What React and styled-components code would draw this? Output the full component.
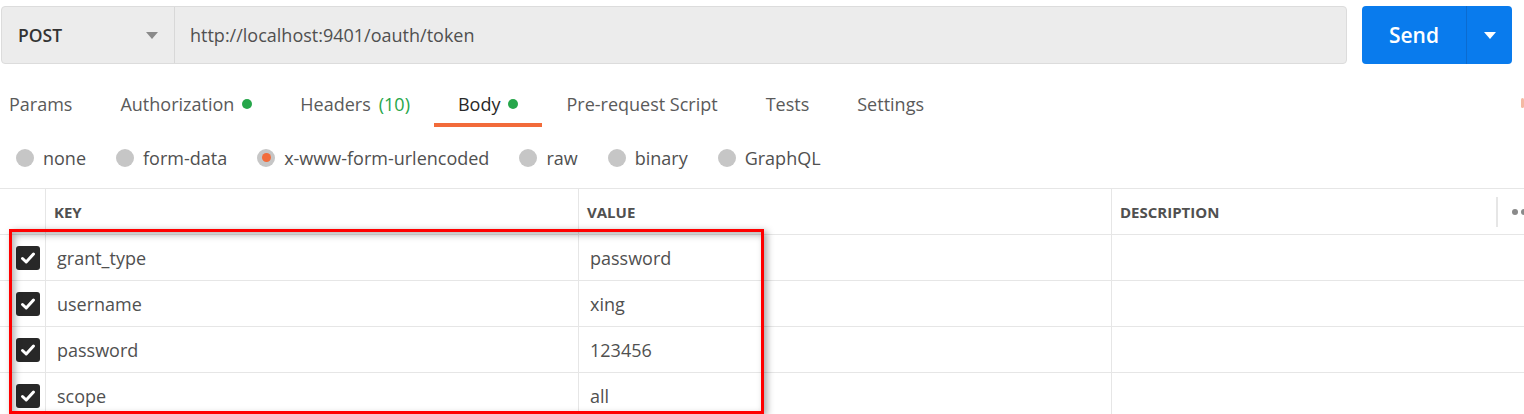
import React from 'react';
import styled, { createGlobalStyle } from 'styled-components';

const GlobalStyle = createGlobalStyle`
    html, body {
        margin: 0;
        padding: 0;
        background: #ffffff;
        overflow: hidden;
    }
    body {
        font-family: "Open Sans", "Noto Sans", sans-serif;
        color: #505050;
    }
`

const Page = styled.div`
    position: relative;
    width: 1524px;
    height: 414px;
    overflow: hidden;
`

const TopBar = styled.div`
    display: flex;
    align-items: stretch;
    height: 58px;
    padding: 6px 12px 0 1px;
    gap: 15px;
`

const RequestBox = styled.div`
    flex: 1;
    display: flex;
    background: #ececec;
    border: 1px solid #dcdcdc;
    border-radius: 4px;
`

const MethodSelect = styled.div`
    width: 173px;
    box-sizing: border-box;
    display: flex;
    align-items: center;
    justify-content: space-between;
    padding: 0 16px 0 16px;
    border-right: 1px solid #d8d8d8;
    font-size: 17.5px;
    font-weight: 600;
    color: #333333;
`

const Caret = styled.span`
    width: 0;
    height: 0;
    border-left: 6px solid transparent;
    border-right: 6px solid transparent;
    border-top: 7px solid ${p => p.$color || '#8a8a8a'};
`

const UrlText = styled.div`
    display: flex;
    align-items: center;
    padding-left: 15px;
    font-size: 18px;
    color: #505050;
`

const SendButton = styled.div`
    width: 150px;
    display: flex;
    background: #097bed;
    border-radius: 4px;
    color: #ffffff;
`

const SendLabel = styled.div`
    flex: 1;
    display: flex;
    align-items: center;
    justify-content: center;
    font-size: 21px;
    font-weight: 600;
    border-right: 1px solid #0b6bd0;
`

const SendArrow = styled.div`
    width: 45px;
    display: flex;
    align-items: center;
    justify-content: center;
`

const Tabs = styled.div`
    display: flex;
    height: 63px;
    margin-left: -15px;
`

const Tab = styled.div`
    display: flex;
    align-items: center;
    gap: 8px;
    padding: 21px 24px 0 24px;
    font-size: 18px;
    border-bottom: 4px solid ${p => (p.$active ? '#f26b3a' : 'transparent')};
    color: ${p => (p.$active ? '#282828' : '#5a5a5a')};
`

const Dot = styled.span`
    width: 10px;
    height: 10px;
    border-radius: 50%;
    background: #26a64a;
`

const Count = styled.span`
    color: #26a64a;
`

const Radios = styled.div`
    display: flex;
    align-items: center;
    gap: 30px;
    height: 61px;
    padding-left: 16px;
    border-bottom: 1px solid #e6e6e6;
`

const RadioItem = styled.div`
    display: flex;
    align-items: center;
    gap: 9px;
    font-size: 18px;
    color: #505050;
`

const RadioCircle = styled.span`
    width: 18px;
    height: 18px;
    border-radius: 50%;
    background: #c6c6c6;
    display: flex;
    align-items: center;
    justify-content: center;
    &::after {
        content: '';
        width: 9px;
        height: 9px;
        border-radius: 50%;
        background: ${p => (p.$checked ? '#f26b3a' : 'transparent')};
    }
`

const Table = styled.div`
    display: grid;
    grid-template-columns: 46px 533px 533px 1fr;
`

const HeadCell = styled.div`
    height: 45px;
    display: flex;
    align-items: center;
    padding-left: 8px;
    font-size: 15px;
    font-weight: 700;
    color: #505050;
    border-right: ${p => (p.$last ? 'none' : '1px solid #e6e6e6')};
    border-bottom: 1px solid #e6e6e6;
    justify-content: space-between;
`

const Cell = styled.div`
    height: 45px;
    display: flex;
    align-items: center;
    padding-left: 11px;
    font-size: 18px;
    color: #505050;
    border-right: ${p => (p.$last ? 'none' : '1px solid #e6e6e6')};
    border-bottom: 1px solid #e6e6e6;
`

const CheckCell = styled(Cell)`
    padding-left: 16px;
`

const CheckBox = styled.span`
    width: 24px;
    height: 24px;
    border-radius: 3px;
    background: #282828;
    display: flex;
    align-items: center;
    justify-content: center;
`

const HeadTools = styled.div`
    display: flex;
    align-items: center;
    height: 30px;
    gap: 14px;
`

const ToolDivider = styled.span`
    width: 2px;
    height: 30px;
    background: #e6e6e6;
`

const MoreDots = styled.span`
    display: flex;
    gap: 3px;
    margin-right: -12px;
    span {
        width: 6px;
        height: 6px;
        border-radius: 50%;
        background: #8a8a8a;
    }
`

const Highlight = styled.div`
    position: absolute;
    left: 9px;
    top: 229px;
    width: 755px;
    height: 185px;
    box-sizing: border-box;
    border: 3px solid #ff0000;
    box-shadow: 3px 2px 7px rgba(0, 0, 0, 0.35), inset 3px 3px 7px rgba(0, 0, 0, 0.3);
    pointer-events: none;
`

const EdgeMark = styled.span`
    position: absolute;
    right: 0;
    top: 98px;
    width: 3px;
    height: 10px;
    border-radius: 2px;
    background: #f4b9a3;
`

const rows = [
    ['grant_type', 'password'],
    ['username', 'xing'],
    ['password', '123456'],
    ['scope', 'all'],
]

const Check = () => (
    <svg width="16" height="16" viewBox="0 0 16 16">
        <path d="M2.5 8.5 L6.2 12 L13.5 4" fill="none" stroke="#ffffff" strokeWidth="3" strokeLinecap="round" strokeLinejoin="round" />
    </svg>
)

export default function App() {
    return (
        <>
            <GlobalStyle />
            <Page>
                <TopBar>
                    <RequestBox>
                        <MethodSelect>
                            POST
                            <Caret />
                        </MethodSelect>
                        <UrlText>http://localhost:9401/oauth/token</UrlText>
                    </RequestBox>
                    <SendButton>
                        <SendLabel>Send</SendLabel>
                        <SendArrow>
                            <Caret $color="#ffffff" />
                        </SendArrow>
                    </SendButton>
                </TopBar>

                <Tabs>
                    <Tab>Params</Tab>
                    <Tab>Authorization <Dot /></Tab>
                    <Tab>Headers <Count>(10)</Count></Tab>
                    <Tab $active>Body <Dot /></Tab>
                    <Tab>Pre-request Script</Tab>
                    <Tab>Tests</Tab>
                    <Tab>Settings</Tab>
                </Tabs>
                <EdgeMark />

                <Radios>
                    {['none', 'form-data', 'x-www-form-urlencoded', 'raw', 'binary', 'GraphQL'].map(r => (
                        <RadioItem key={r}>
                            <RadioCircle $checked={r === 'x-www-form-urlencoded'} />
                            {r}
                        </RadioItem>
                    ))}
                </Radios>

                <Table>
                    <HeadCell />
                    <HeadCell>KEY</HeadCell>
                    <HeadCell>VALUE</HeadCell>
                    <HeadCell $last>
                        DESCRIPTION
                        <HeadTools>
                            <ToolDivider />
                            <MoreDots><span /><span /><span /></MoreDots>
                        </HeadTools>
                    </HeadCell>
                    {rows.map(([k, v]) => (
                        <React.Fragment key={k}>
                            <CheckCell>
                                <CheckBox><Check /></CheckBox>
                            </CheckCell>
                            <Cell>{k}</Cell>
                            <Cell>{v}</Cell>
                            <Cell $last />
                        </React.Fragment>
                    ))}
                </Table>

                <Highlight />
            </Page>
        </>
    )
}
